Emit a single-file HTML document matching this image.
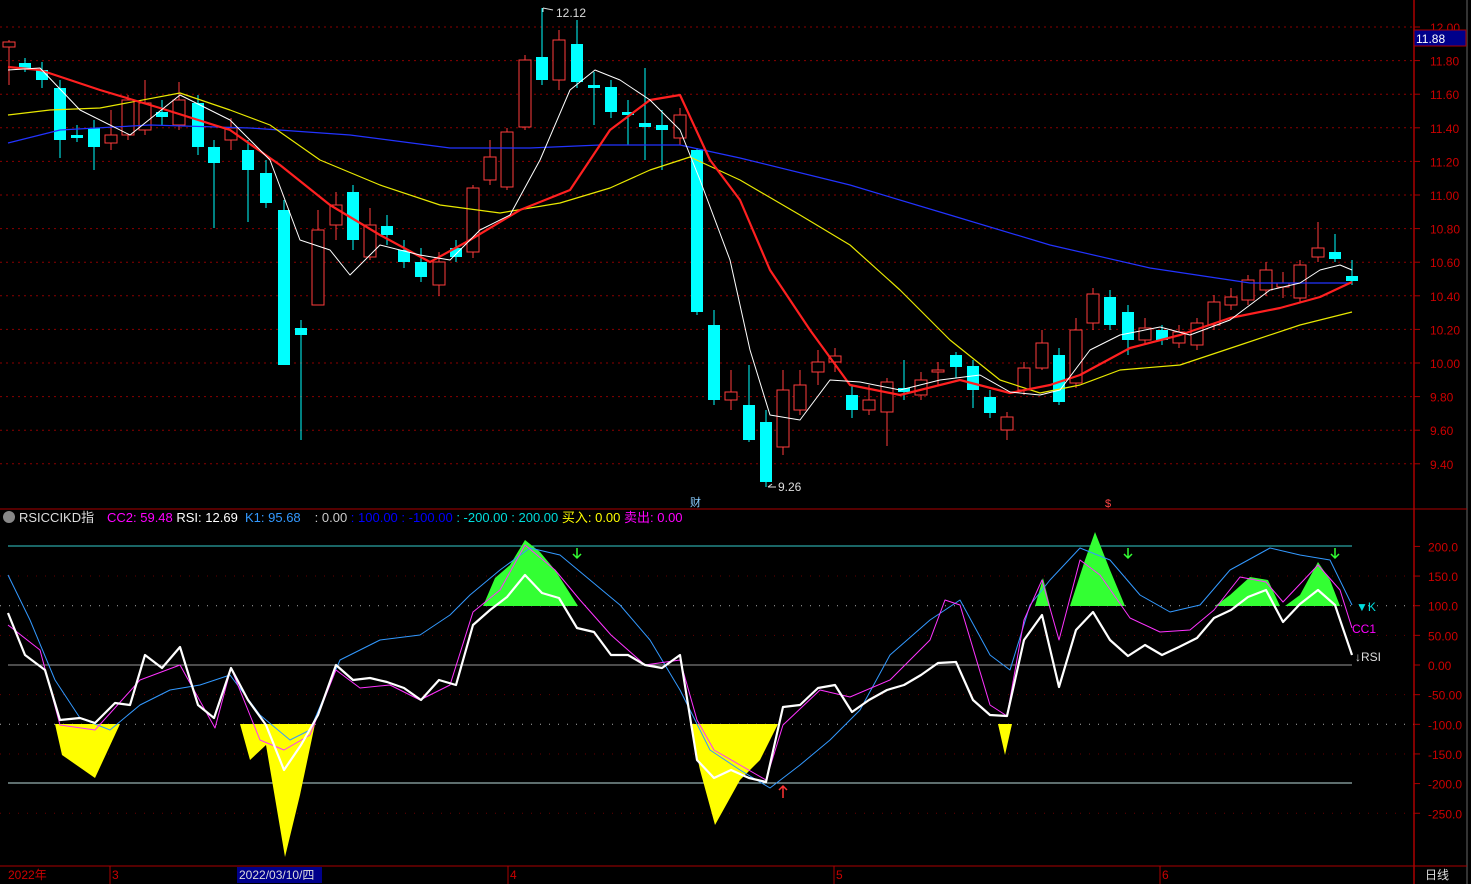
<!DOCTYPE html>
<html><head><meta charset="utf-8"><style>
html,body{margin:0;padding:0;background:#000;width:1471px;height:884px;overflow:hidden}
svg{display:block}
text{font-family:"Liberation Sans","Noto Sans CJK SC",sans-serif}
</style></head><body>
<svg id="s" width="1471" height="884" xmlns="http://www.w3.org/2000/svg">
<rect width="1471" height="884" fill="#000"/>
<g id="grid"></g>
<line x1="1414" y1="0" x2="1414" y2="884" stroke="#a00" stroke-width="1.5"/>
<line x1="1467" y1="0" x2="1467" y2="884" stroke="#333" stroke-width="2"/>
<line x1="0" y1="509" x2="1414" y2="509" stroke="#a00"/>
<line x1="0" y1="866" x2="1467" y2="866" stroke="#a00"/>
<line x1="1414" y1="509" x2="1467" y2="509" stroke="#a00"/>
<g id="candles"></g>
<g id="lines"></g>
<rect x="1414" y="30" width="52" height="16" fill="#00008b" stroke="#a00"/>
<text x="1416" y="43" fill="#fff" font-size="12">11.88</text>
<text x="556" y="17" fill="#ddd" font-size="12">12.12</text>
<path d="M543 8 L543 12 M543 8 L553 10" stroke="#ddd" fill="none"/>
<text x="778" y="491" fill="#ddd" font-size="12">9.26</text>
<path d="M768 487 L776 487 M768 487 L772 484" stroke="#ddd" fill="none"/>
<text x="690" y="506" fill="#8cf" font-size="11">财</text>
<text x="1105" y="507" fill="#f44" font-size="11">$</text>
<circle cx="9" cy="517" r="6" fill="#888"/>
<text x="19" y="522" fill="#ddd" font-size="13">RSICCIKD指</text>
<text x="107" y="522" font-size="13"><tspan fill="#f0f">CC2: 59.48 </tspan><tspan fill="#fff">RSI: 12.69</tspan></text>
<text x="245" y="522" font-size="13"><tspan fill="#39f">K1: 95.68</tspan><tspan fill="#ccc" dx="14">: 0.00 </tspan><tspan fill="#00f">: 100.00 : -100.00 </tspan><tspan fill="#0dd">: -200.00 : 200.00 </tspan><tspan fill="#ff0">买入: 0.00 </tspan><tspan fill="#f0f"> 卖出: 0.00</tspan></text>
<text x="1356" y="611" fill="#0dd" font-size="12">▼K</text>
<text x="1352" y="633" fill="#f0f" font-size="12">CC1</text>
<text x="1355" y="661" fill="#ddd" font-size="12">↓RSI</text>
<text x="8" y="879" fill="#c00" font-size="12">2022年</text>
<line x1="110" y1="866" x2="110" y2="884" stroke="#a00"/>
<text x="112" y="879" fill="#c00" font-size="12">3</text>
<rect x="237" y="867" width="85" height="16" fill="#00008b"/>
<text x="239" y="879" fill="#ddd" font-size="12">2022/03/10/四</text>
<line x1="508" y1="866" x2="508" y2="884" stroke="#a00"/>
<text x="510" y="879" fill="#c00" font-size="12">4</text>
<line x1="834" y1="866" x2="834" y2="884" stroke="#a00"/>
<text x="836" y="879" fill="#c00" font-size="12">5</text>
<line x1="1160" y1="866" x2="1160" y2="884" stroke="#a00"/>
<text x="1162" y="879" fill="#c00" font-size="12">6</text>
<text x="1425" y="879" fill="#ddd" font-size="12">日线</text>
</svg>
<script>
var NS="http://www.w3.org/2000/svg";
function el(p,t,a){var e=document.createElementNS(NS,t);for(var k in a)e.setAttribute(k,a[k]);document.getElementById(p).appendChild(e);return e;}
for(var i=0;i<14;i++){var v=12.0-i*0.2,y=27+i*33.6;
el("grid","line",{x1:0,y1:y,x2:1414,y2:y,stroke:"#8b0000","stroke-dasharray":"2,4"});
el("grid","line",{x1:1414,y1:y,x2:1420,y2:y,stroke:"#a00"});
var t=el("grid","text",{x:1430,y:y+5,fill:"#c00","font-size":12});t.textContent=v.toFixed(2);}
var iv=[200,150,100,50,0,-50,-100,-150,-200,-250];
iv.forEach(function(v){var y=665-v*0.593;
if(v!=200&&v!=-200&&v!=0)el("grid","line",{x1:0,y1:y,x2:1414,y2:y,stroke:(v==100||v==-100)?"#aaa":"#600","stroke-dasharray":"1,8"});
el("grid","line",{x1:1414,y1:y,x2:1420,y2:y,stroke:"#a00"});
var t=el("grid","text",{x:1428,y:y+5,fill:"#c00","font-size":12});t.textContent=(Math.abs(v)>=100?v.toFixed(1):v.toFixed(2));});
el("grid","line",{x1:8,y1:546,x2:1352,y2:546,stroke:"#3cc"});
el("grid","line",{x1:8,y1:783,x2:1352,y2:783,stroke:"#bdd"});
el("grid","line",{x1:8,y1:665,x2:1352,y2:665,stroke:"#ccc","stroke-width":0.8});
var C=[[9,42,47,40,85,"r"],[25,63,68,58,72,"c"],[42,70,80,62,88,"c"],[60,88,140,80,158,"c"],[77,135,138,125,142,"c"],[94,128,147,120,170,"c"],[111,135,143,110,150,"r"],[128,100,135,95,140,"r"],[145,103,130,80,135,"r"],[162,112,117,100,125,"c"],[179,100,125,82,130,"r"],[198,103,147,95,155,"c"],[214,147,163,140,228,"c"],[231,128,140,118,150,"r"],[248,150,170,140,222,"c"],[266,173,203,160,208,"c"],[284,210,365,200,365,"c"],[301,328,335,320,440,"c"],[318,230,305,210,305,"r"],[336,205,225,192,240,"r"],[353,192,240,185,250,"c"],[370,225,257,208,260,"r"],[387,226,235,215,245,"c"],[404,250,262,240,268,"c"],[421,262,277,248,282,"c"],[439,262,285,252,296,"r"],[456,248,257,240,262,"c"],[473,188,252,185,258,"r"],[490,157,180,140,185,"r"],[507,132,187,128,190,"r"],[525,60,127,55,130,"r"],[542,57,80,8,85,"c"],[559,40,80,30,90,"r"],[577,44,82,20,88,"c"],[594,85,88,72,125,"c"],[611,87,112,80,118,"c"],[628,112,115,100,145,"c"],[645,123,127,68,160,"c"],[662,125,130,110,170,"c"],[680,115,138,108,145,"r"],[697,150,312,148,315,"c"],[714,325,400,310,405,"c"],[731,392,400,370,410,"r"],[749,405,440,365,442,"c"],[766,422,482,410,487,"c"],[783,390,447,370,455,"r"],[800,385,410,370,415,"r"],[818,362,372,350,385,"r"],[835,356,362,348,372,"r"],[852,395,410,385,418,"c"],[869,400,410,385,415,"r"],[887,382,412,378,446,"r"],[904,388,392,360,400,"c"],[921,380,395,372,400,"r"],[938,370,372,362,385,"r"],[956,355,367,352,378,"c"],[973,366,390,360,408,"c"],[990,397,413,390,418,"c"],[1007,417,430,412,440,"r"],[1024,368,390,362,395,"r"],[1042,343,368,330,370,"r"],[1059,355,402,348,405,"c"],[1076,330,383,318,388,"r"],[1093,294,323,288,330,"r"],[1110,297,325,290,330,"c"],[1128,312,340,305,355,"c"],[1145,328,340,318,345,"r"],[1162,330,340,325,345,"c"],[1179,332,343,325,348,"r"],[1197,323,345,318,350,"r"],[1214,302,325,295,330,"r"],[1231,297,305,288,310,"r"],[1248,280,300,275,305,"r"],[1266,270,290,262,296,"r"],[1283,283,287,272,298,"r"],[1300,265,298,260,302,"r"],[1318,248,257,222,262,"r"],[1335,252,259,234,262,"c"],[1352,276,281,260,285,"c"]];
C.forEach(function(c){var col=c[5]=="r"?"#ff3c3c":"#00ffff";
el("candles","line",{x1:c[0],y1:c[3],x2:c[0],y2:c[4],stroke:col});
var r=el("candles","rect",{x:c[0]-6,y:c[1],width:12,height:Math.max(2,c[2]-c[1])});
if(c[5]=="r"){r.setAttribute("fill","#000");r.setAttribute("stroke",col);}else r.setAttribute("fill",col);});
function pl(pts,col,w){el("lines","polyline",{points:pts,fill:"none",stroke:col,"stroke-width":w,"stroke-linejoin":"round"});}
pl("8,143 60,130 150,125 250,128 350,135 450,148 530,148 600,145 680,145 740,158 850,185 950,215 1050,245 1150,268 1250,283 1352,283","#2233ff",1.2);
pl("8,115 50,110 100,108 180,93 230,110 270,125 320,160 380,185 440,205 500,213 560,203 610,188 650,170 690,157 740,180 800,215 850,245 900,290 950,340 1000,380 1040,393 1080,385 1120,370 1180,365 1240,345 1300,325 1352,312","#e8e800",1.2);
pl("8,67 40,70 100,90 160,108 230,130 280,165 330,205 380,235 430,262 470,240 520,210 570,190 610,130 650,100 680,95 710,160 740,200 770,270 810,330 850,385 900,395 960,380 1010,393 1050,385 1080,375 1130,348 1180,335 1230,318 1280,308 1320,297 1352,282","#ff2020",2.2);
pl("8,70 40,68 80,110 130,135 180,95 230,120 270,160 300,240 330,250 350,275 380,245 420,255 450,260 480,230 510,215 540,160 570,90 595,70 620,80 650,100 680,130 700,180 730,260 750,350 770,415 800,420 830,380 860,382 900,390 940,380 980,375 1010,392 1040,395 1060,390 1090,350 1120,335 1160,327 1190,335 1230,320 1270,290 1300,283 1320,270 1340,265 1352,270","#fff",1);
function pg(pts,col){el("lines","polygon",{points:pts,fill:col});}
pg("483,606 495,578 510,565 525,540 540,552 555,570 578,606","#33ff33");
pg("1035,606 1043,578 1050,606","#33ff33");
pg("1070,606 1085,560 1095,532 1110,570 1125,606","#33ff33");
pg("1215,606 1230,595 1250,577 1268,580 1280,606","#33ff33");
pg("1285,606 1300,595 1318,562 1330,580 1340,606","#33ff33");
pg("55,724 62,755 95,778 120,724","#ffff00");
pg("240,724 250,760 266,745 285,857 300,795 315,724","#ffff00");
pg("690,724 700,770 715,825 740,780 760,760 778,724","#ffff00");
pg("998,724 1005,755 1012,724","#ffff00");
var W="8,613 25,655 45,670 60,720 80,718 95,723 115,703 130,705 145,655 162,668 180,647 198,705 214,718 231,668 248,700 266,725 284,770 301,745 318,715 336,665 353,680 370,678 387,682 404,688 421,700 439,680 456,685 473,625 490,610 507,597 525,575 542,593 559,598 577,628 594,632 611,655 628,655 645,665 662,668 680,655 697,760 714,778 731,770 749,778 766,782 783,707 800,705 818,688 835,685 852,712 869,700 887,690 904,685 921,675 938,663 956,662 973,700 990,715 1007,716 1024,640 1042,615 1059,687 1076,630 1093,612 1110,640 1128,656 1145,645 1162,655 1179,647 1197,638 1214,618 1231,610 1248,597 1266,590 1283,622 1300,604 1318,590 1335,605 1352,655";
pl("8,575 30,620 55,680 80,718 110,730 140,705 170,690 200,685 230,675 260,715 290,740 310,730 340,660 380,640 420,635 450,615 470,595 500,570 530,548 560,555 590,580 620,605 650,640 680,690 710,750 740,770 770,788 800,765 830,740 860,710 890,655 930,620 960,600 990,655 1010,670 1030,605 1050,580 1080,548 1110,560 1140,595 1170,612 1200,605 1230,570 1270,548 1300,555 1330,560 1352,605","#3399ff",1);
pl("8,625 40,650 60,725 95,730 140,680 180,665 215,728 231,668 260,740 284,750 310,735 336,670 360,688 390,685 420,700 450,685 473,612 500,590 525,545 555,570 580,600 611,635 645,665 680,660 697,720 714,750 740,765 766,780 783,725 820,690 850,697 890,680 930,640 945,600 960,605 990,705 1007,716 1024,620 1042,580 1059,640 1080,560 1100,575 1130,618 1160,632 1190,630 1214,610 1240,577 1266,582 1283,602 1318,565 1340,590 1352,628","#ff33ff",1);
pl(W,"#fff",2.2);
[[577,548,"#3f3"],[1128,548,"#3f3"],[1335,548,"#3f3"]].forEach(function(a){el("lines","path",{d:"M"+a[0]+" "+a[1]+" v10 M"+(a[0]-4)+" "+(a[1]+6)+" l4 4 l4 -4",stroke:a[2],fill:"none","stroke-width":1.5});});
el("lines","path",{d:"M783 798 v-12 M779 790 l4 -4 l4 4",stroke:"#f33",fill:"none","stroke-width":1.5});
</script>
</body></html>
